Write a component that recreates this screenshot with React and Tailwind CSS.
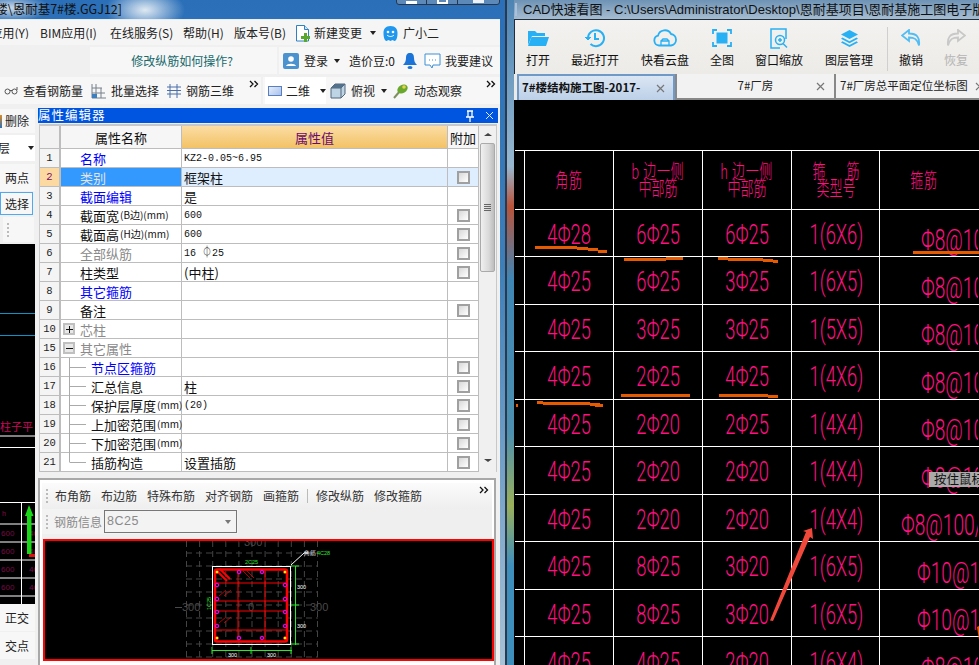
import React from "react";

const CJK = "[font-family:'Noto_Sans_CJK_SC','Liberation_Sans',sans-serif]";
const MONO = "[font-family:'Liberation_Mono','Noto_Sans_CJK_SC',monospace]";
const THIN = "[font-family:'Roboto','Noto_Sans_CJK_SC',sans-serif]";

function Chevrons({ className = "" }) {
  return (
    <svg width="10" height="8" viewBox="0 0 10 8" className={className}>
      <path d="M1 1l3 3-3 3M5.500 1l3 3-3 3" fill="none" stroke="#111" strokeWidth="1.300" />
    </svg>
  );
}
function Caret({ className = "" }) {
  return <span className={"inline-block w-0 h-0 border-x-[3px] border-x-transparent border-t-[4px] border-t-[#222] " + className} />;
}
function Grip() {
  return (
    <svg width="4" height="16" viewBox="0 0 4 16" className="shrink-0">
      {[1, 5, 9, 13].map((y) => <rect key={y} x="1" y={y} width="2" height="2" fill="#bbb" />)}
    </svg>
  );
}

/* ---------- left window ---------- */
function MenuBar() {
  return (
    <div className="h-[26px] mr-[5px] pt-[1px] bg-[#f5f5f5] border-t border-[#e8eef5] flex items-center text-[12px] text-[#222] leading-none whitespace-nowrap">
      <span className="w-[29px] overflow-hidden flex justify-end">应用(Y)</span>
      <span className="ml-[11px] w-[59px]">BIM应用(I)</span>
      <span className="ml-[11px] w-[62px]">在线服务(S)</span>
      <span className="ml-[11px] w-[40px]">帮助(H)</span>
      <span className="ml-[11px] w-[51px]">版本号(B)</span>
      <svg width="15" height="17" viewBox="0 0 15 17" className="ml-[10px]">
        <path d="M1.500.5h8l4 4v11.500h-12z" fill="#fff" stroke="#2f7fc4" />
        <path d="M9.500.5v4h4" fill="#cfe6f7" stroke="#2f7fc4" />
        <path d="M9 8h3v3h3v3h-3v3H9v-3H6v-3h3z" fill="#58a82d" />
      </svg>
      <span className="ml-[4px]">新建变更</span>
      <Caret className="ml-[8px]" />
      <svg width="17" height="17" viewBox="0 0 16 17" className="ml-[6px]">
        <path d="M8 1c5 0 7 3 7 7 0 4-1 8-3 8l-2-1-2 1-2-1-2 1C2 16 1 12 1 8c0-4 2-7 7-7z" fill="#1f97ee" />
        <circle cx="5.500" cy="7" r="1.300" fill="#fff" /><circle cx="10.500" cy="7" r="1.300" fill="#fff" />
        <path d="M4.500 10c2 2 5 2 7 0" fill="none" stroke="#fff" />
      </svg>
      <span className="ml-[4px]">广小二</span>
    </div>
  );
}

function HelpBar() {
  return (
    <div className="h-[32px] mr-[5px] bg-[#f0f0f0] pt-[2px] pb-[3px] flex text-[12px] leading-none whitespace-nowrap">
      <div className="ml-[90px] w-[187px] pt-[1px] pr-[3px] bg-[#f7f7f7] flex items-center justify-center text-[#17696c]">修改纵筋如何操作?</div>
      <div className="ml-[2px] w-[221px] pt-[1px] bg-[#f7f7f7] flex items-center text-[#222]">
        <svg width="16" height="16" viewBox="0 0 16 16" className="ml-[4px]">
          <rect width="16" height="16" rx="2" fill="#4a93cf" />
          <circle cx="8" cy="6" r="2.800" fill="#fff" />
          <path d="M3 13c1-3 9-3 10 0z" fill="#fff" />
        </svg>
        <span className="ml-[5px]">登录</span>
        <Caret className="ml-[6px]" />
        <span className="ml-[9px]">造价豆:0</span>
        <svg width="14" height="16" viewBox="0 0 14 16" className="ml-[8px]">
          <path d="M7 0c3 0 4 2 4 5 0 3 1 5 3 7H0c2-2 3-4 3-7 0-3 1-5 4-5z" fill="#1c74d8" />
          <ellipse cx="7" cy="14.500" rx="2.500" ry="1.500" fill="#1c74d8" />
        </svg>
        <svg width="17" height="17" viewBox="0 0 17 17" className="ml-[7px]">
          <path d="M1 1h15v11H9l-1 3-2-3H1z" fill="#fff" stroke="#3b8fd6" />
          <path d="M5 7h1M8 7h1M11 7h1" stroke="#3b8fd6" />
        </svg>
        <span className="ml-[4px]">我要建议</span>
      </div>
    </div>
  );
}

function ViewBar() {
  return (
    <div className="h-[31px] mr-[5px] bg-[#f0f0f0] flex text-[12px] leading-none whitespace-nowrap text-[#222] pb-[4px]">
      <div className="w-[261px] pt-[1px] bg-[#f7f7f7] relative flex items-center">
        <svg width="14" height="8" viewBox="0 0 14 8" className="ml-[4px]">
          <circle cx="3.500" cy="4.500" r="2.500" fill="none" stroke="#555" /><circle cx="10.500" cy="4.500" r="2.500" fill="none" stroke="#555" />
          <path d="M6 3.500h2M13 3V0" stroke="#555" />
        </svg>
        <span className="ml-[5px]">查看钢筋量</span>
        <svg width="16" height="16" viewBox="0 0 16 16" className="ml-[8px]">
          <path d="M1 1v14h14M1 5h10M1 10h13M5 1v14M10 5v10" fill="none" stroke="#76808c" />
          <rect x="1" y="11" width="5" height="4" fill="#3f7fc0" />
        </svg>
        <span className="ml-[4px]">批量选择</span>
        <svg width="16" height="16" viewBox="0 0 16 16" className="ml-[7px]">
          <path d="M1 4h14M1 11h14M4 1v14M11 1v14M1 7.500h14" fill="none" stroke="#4b6ea8" />
        </svg>
        <span className="ml-[4px]">钢筋三维</span>
        <Chevrons className="absolute right-[2px] top-[3px]" />
      </div>
      <div className="ml-[2px] flex-1 bg-[#f7f7f7] relative flex items-center">
        <div className="ml-[2px] w-[61px] h-full pt-[1px] bg-white flex items-center">
          <span className="ml-[3px] w-[14px] h-[10px] border border-[#5a7fc0] bg-[linear-gradient(135deg,#e4edfb,#a9c2ec)]" />
          <span className="ml-[4px]">二维</span>
          <Caret className="ml-[10px]" />
        </div>
        <svg width="16" height="16" viewBox="0 0 16 16" className="ml-[4px]">
          <path d="M1 5l4-4h10v10l-4 4H1z" fill="#bcd4e4" stroke="#53677a" />
          <path d="M1 5h10v10M11 5l4-4" fill="none" stroke="#53677a" />
          <path d="M1 5l4-4h10l-4 4z" fill="#54718c" />
        </svg>
        <span className="ml-[5px] pt-[1px]">俯视</span>
        <Caret className="ml-[6px]" />
        <svg width="16" height="16" viewBox="0 0 16 16" className="ml-[6px]">
          <path d="M1 15L7 8" stroke="#7f8f60" strokeWidth="2" />
          <ellipse cx="9.500" cy="6" rx="5.500" ry="4" fill="#6aa82d" transform="rotate(-30 9.500 6)" />
          <circle cx="11" cy="4" r="1.800" fill="#e5d34a" />
        </svg>
        <span className="ml-[5px] pt-[1px]">动态观察</span>
        <Chevrons className="absolute right-[4px] top-[3px]" />
      </div>
    </div>
  );
}

function Sidebar() {
  const tool = "flex items-center justify-center bg-[#f7f7f7] text-[12px] leading-none text-[#222]";
  return (
    <div className="w-[38px] h-full bg-[#f0f0f0] flex flex-col whitespace-nowrap">
      <div className={tool + " h-[24px] justify-start mt-[1px] mr-[3px]"}>
        <span className="w-[2px] h-[13px] bg-[linear-gradient(#e08a20,#2f6fb5)]" />
        <span className="ml-[3px]">删除</span>
      </div>
      <div className="h-[26px] mt-[2px] bg-white flex items-center mr-[3px] justify-between pr-[1px]">
        <span className="w-[10px] overflow-hidden text-[12px] leading-none text-[#222] flex justify-end">层</span>
        <Caret />
      </div>
      <div className={tool + " h-[27px] mt-[3px] mr-[3px] pl-[5px] justify-start"}>两点</div>
      <div className={tool + " h-[23px] mt-[1px] mr-[5px] border border-[#50a8f0] pl-[4px] justify-start"}>选择</div>
      <div className="h-[25px] mt-[2px] mr-[4px] ml-[3px] bg-[#f7f7f7] flex items-center pl-[3px]"><Grip /></div>
      <div className="h-[360px] mt-[2px] mr-[3px] bg-black overflow-hidden">
        <svg width="35" height="360" viewBox="0 243 35 360">
          <path d="M0 312.500h35M0 334.500h35" stroke="#0a94c8" />
          <path d="M0 435h35M0 446.500h35" stroke="#fff" />
          <text x="0" y="430" fontSize="11" fill="#c80a5a" fontFamily="'Noto Sans CJK SC', sans-serif">柱子平</text>
          <path d="M0 501.500h35M0 523h35M0 541h35M0 559h35M0 577h35M0 595h35M21.500 501v102" stroke="#fff" />
          <text x="2" y="515" fontSize="7" fill="#8a0a4a" fontFamily="'Liberation Sans', sans-serif">h</text>
          {[535, 553, 571, 589].map((y) => (
            <g key={y} fontSize="8" fontFamily="'Liberation Sans', sans-serif" fill="#7a0a46">
              <text x="1" y={y}>600</text>
              <text x="29" y={y}>40</text>
            </g>
          ))}
          <rect x="29" y="553" width="6" height="3" fill="#e01010" />
          <path d="M29 504l-4 11h2v38h4.500v-38h2z" fill="#18d818" />
        </svg>
      </div>
      <div className={tool + " h-[27px] mr-[3px] pl-[5px] justify-start bg-[#f5f5f5]"}>正交</div>
      <div className={tool + " h-[27px] mt-[1px] mr-[3px] pl-[5px] justify-start bg-[#eeeeee]"}>交点</div>
    </div>
  );
}

const PROPS = [
  ["1", "名称", "KZ2-0.05~6.95", "blue", false, 0],
  ["2", "类别", "框架柱", "sel", true, 0],
  ["3", "截面编辑", "是", "blue", false, 0],
  ["4", "截面宽(B边)(mm)", "600", "", true, 0],
  ["5", "截面高(H边)(mm)", "600", "", true, 0],
  ["6", "全部纵筋", "16 ⏀25", "gray", true, 0],
  ["7", "柱类型", "(中柱)", "", true, 0],
  ["8", "其它箍筋", "", "blue", false, 0],
  ["9", "备注", "", "", true, 0],
  ["10", "芯柱", "", "gray", false, 1],
  ["15", "其它属性", "", "gray", false, 2],
  ["16", "节点区箍筋", "", "blue", true, 3],
  ["17", "汇总信息", "柱", "", true, 3],
  ["18", "保护层厚度(mm)", "(20)", "", true, 3],
  ["19", "上加密范围(mm)", "", "", true, 3],
  ["20", "下加密范围(mm)", "", "", true, 3],
  ["21", "插筋构造", "设置插筋", "", true, 3],
];

function Check() {
  return <span className="block w-[13px] h-[13px] border-2 border-[#a0a0a0] bg-[linear-gradient(135deg,#d8d8d8,#fff)]" />;
}

function PropRow({ r }) {
  const [num, name, value, kind, check, tree] = r;
  const sel = kind === "sel";
  const color = kind === "blue" ? "text-[#0000ff]" : kind === "gray" ? "text-[#8a8a8a]" : sel ? "text-[#e4e4e4]" : "text-[#111]";
  const latin = /^[0-9KZ(]/.test(value) && !value.includes("中");
  const cut = name.indexOf("(");
  return (
    <div className={"flex h-[19px] border-b border-[#bdbdbd] leading-none " + (sel ? "bg-[#dfeeff]" : "bg-white")}>
      <div className={"w-[21px] border-r-2 border-[#bdbdbd] flex items-center justify-center text-[10.500px] [font-family:'Liberation_Mono',monospace] " + (sel ? "bg-[#fcd9a0] text-[#7a0a6a]" : "bg-[#f4f4f4] text-[#222]")}>{num}</div>
      <div className={"w-[121px] border-r border-[#bdbdbd] relative flex items-center text-[13px] whitespace-nowrap " + color + " " + (sel ? "bg-[#3399ff]" : "") + " " + (tree === 3 ? "pl-[30px]" : "pl-[19px]")}>
        {(tree === 1 || tree === 2) && (
          <span className="absolute left-[2px] top-[3px] w-[12px] h-[12px] border-2 border-[#c0c0c0] bg-[#e8e8e8] flex items-center justify-center">
            <span className="w-[7px] h-px bg-[#111]" />
            {tree === 1 && <span className="absolute w-px h-[7px] bg-[#111]" />}
          </span>
        )}
        {tree === 3 && (
          <svg width="20" height="19" viewBox="0 0 20 19" className="absolute left-[7px] top-0">
            <path d={num === "21" ? "M1.500 0v9.500M2 9.500h16" : "M1.500 0v19M2 9.500h16"} stroke="#aaa" fill="none" />
          </svg>
        )}
        {cut < 0 ? name : (
          <>
            {name.slice(0, cut)}
            <span className="text-[10px] ml-[1px]">{name.slice(cut)}</span>
          </>
        )}
      </div>
      <div className={"w-[266px] border-r border-[#bdbdbd] flex items-center pl-[2px] whitespace-nowrap text-[#111] " + (latin ? MONO : "text-[13px]") + (kind === "gray" ? " text-[#8a8a8a]" : "")}>
        {latin ? <span className="inline-block origin-left scale-x-[0.91] text-[11px]">{value}</span> : value}
      </div>
      <div className="w-[31px] border-r border-[#bdbdbd] flex items-center justify-center">{check && <Check />}</div>
    </div>
  );
}

function Scrollbar() {
  return (
    <div className="w-[17px] bg-[#f0f0f0] flex flex-col items-center">
      <span className="mt-[7px] w-0 h-0 border-x-[4px] border-x-transparent border-b-[3px] border-b-[#444]" />
      <div className="mt-[7px] w-[15px] h-[129px] rounded-[2px] border border-[#aaa] bg-[linear-gradient(90deg,#f0f0f0,#d9d9d9_60%,#bdbdbd)] flex flex-col items-center justify-center gap-[1px]">
        {[0, 1, 2, 3].map((i) => <span key={i} className="w-[7px] h-px bg-[#666]" />)}
      </div>
      <span className="mt-[187px] w-0 h-0 border-x-[4px] border-x-transparent border-t-[3px] border-t-[#444]" />
    </div>
  );
}

function RebarDiagram() {
  const xs = []; for (let x = 186.500; x <= 318; x += 13.100) xs.push(x);
  const ys = []; for (let y = 554; y <= 660; y += 13) ys.push(y);
  const pink = [[239, 573], [262, 573], [239, 639], [262, 639], [217, 586], [217, 600], [217, 613], [217, 627], [285, 586], [285, 600], [285, 613], [285, 627]];
  const yellow = [[217, 573], [285, 573], [217, 639], [285, 639]];
  const gtxt = { fontFamily: "'Liberation Sans', sans-serif" };
  return (
    <svg width="451" height="121" viewBox="43 540 451 121" className="block">
      <rect x="43" y="540" width="451" height="121" fill="#000" />
      <g stroke="#444" strokeDasharray="6 4">
        {xs.map((x) => <path key={x} d={`M${x} 542V659`} />)}
        {ys.map((y) => <path key={y} d={`M186 ${y}H318`} />)}
      </g>
      <g fill="#4a4a4a" fontSize="11" style={gtxt}>
        <text x="182" y="612">300</text>
        <text x="310" y="612">300</text>
        <text x="244" y="547">300</text>
        <text x="248" y="612">0</text>
      </g>
      <path d="M175 608.500h7" stroke="#4a4a4a" />
      <rect x="212.500" y="567.500" width="78" height="78" fill="none" stroke="#fff" />
      <rect x="215" y="570.500" width="72" height="72" rx="2" fill="none" stroke="#f00" strokeWidth="2.500" />
      <path d="M238 571V642M265 571V642M215 584H287M215 602H287M215 612H287M215 631H287" stroke="#f00" fill="none" />
      <path d="M217 572l10 10M220 570l10 10" stroke="#f00" strokeWidth="2" />
      <path d="M219 597l7-6M224 597l7-6M219 624l7-6M224 624l7-6M243 572l7 7M247 572l7 7" stroke="#f00" strokeWidth="0.700" />
      {pink.map(([x, y]) => <circle key={`${x}-${y}`} cx={x} cy={y} r="1.800" fill="#300030" stroke="#f0f" />)}
      {yellow.map(([x, y]) => <circle key={`${x}-${y}`} cx={x} cy={y} r="1.600" fill="#ff0" stroke="#f00" strokeWidth="0.500" />)}
      <path d="M212 651.500H292M295.500 567V646" stroke="#2be82b" fill="none" />
      <path d="M212 648v7M251 648v7M291 648v7M291 567h8M291 606h8M291 645h8" stroke="#2be82b" fill="none" />
      <path d="M291 566l13-12h4" stroke="#fff" fill="none" />
      <g fontSize="5.500" style={gtxt}>
        <text x="304" y="556" fill="#fff">角筋</text>
        <text x="317" y="556" fill="#2be82b">4C28</text>
        <text x="245" y="565" fill="#2be82b">2C25</text>
        <text x="297" y="590" fill="#fff">300</text>
        <text x="297" y="629" fill="#fff">300</text>
        <text x="228" y="658" fill="#fff">300</text>
        <text x="267" y="658" fill="#fff">300</text>
        <text x="0" y="0" fill="#2be82b" transform="translate(211 611) rotate(-90)">1C25</text>
      </g>
    </svg>
  );
}

function BottomPanel() {
  const t = "text-[#333]";
  return (
    <div className="mt-[6px] h-[187px] w-[458px] border-2 border-[#a8a8a8] border-b-0 bg-white pt-[3px] flex flex-col">
      <div className="mx-[2px] h-[26px] bg-[linear-gradient(#fbfbfb,#eeeeee)] flex items-center text-[12px] leading-none whitespace-nowrap relative">
        <span className="ml-[3px]"><Grip /></span>
        <span className={"ml-[6px] " + t}>布角筋</span>
        <span className={"ml-[10px] " + t}>布边筋</span>
        <span className={"ml-[10px] " + t}>特殊布筋</span>
        <span className={"ml-[10px] " + t}>对齐钢筋</span>
        <span className={"ml-[10px] " + t}>画箍筋</span>
        <span className="ml-[8px] w-px h-[14px] bg-[#bbb]" />
        <span className={"ml-[8px] " + t}>修改纵筋</span>
        <span className={"ml-[10px] " + t}>修改箍筋</span>
        <Chevrons className="absolute right-[3px] top-[3px]" />
      </div>
      <div className="mx-[2px] h-[31px] bg-[#efefef] flex items-start whitespace-nowrap leading-none">
        <div className="w-[196px] h-[25px] bg-[#f3f3f3] flex items-center">
          <span className="ml-[3px]"><Grip /></span>
          <span className="ml-[5px] text-[12px] text-[#8a8a8a]">钢筋信息</span>
          <div className="ml-[2px] w-[133px] h-[23px] border border-[#777] flex items-center justify-between px-[2px] shrink-0">
            <span className="text-[12.500px] text-[#8a8a8a] [font-family:'Liberation_Sans',sans-serif] tracking-[0.500px]">8C25</span>
            <Caret className="mr-[3px] border-t-[#777]" />
          </div>
        </div>
      </div>
      <div className="ml-[3px] w-[451px] border-2 border-[#ff0000] h-[122px] overflow-hidden bg-black -mt-[1px]">
        <div className="-m-[2px]"><RebarDiagram /></div>
      </div>
    </div>
  );
}

function PropertyEditor() {
  return (
    <div className="w-[462px] flex flex-col bg-[#f0f0f0] h-full">
      <div className="h-[15px] w-[460px] bg-[#0055e0] flex items-center text-white text-[12.500px] leading-none tracking-[1px] shrink-0 whitespace-nowrap">
        <span>属性编辑器</span>
        <svg width="10" height="12" viewBox="0 0 10 12" className="ml-auto">
          <path d="M2 1h6M3 1v6M7 1v6M1 7h8M5 7v5" stroke="#fff" strokeWidth="1.300" />
        </svg>
        <svg width="9" height="9" viewBox="0 0 9 9" className="ml-[10px] mr-[4px]">
          <path d="M1 1l7 7M8 1L1 8" stroke="#dfe9ff" />
        </svg>
      </div>
      <div className="ml-[1px] w-[458px] border-x border-t-2 border-[#c8c8c8] bg-white h-[348px] flex mt-[1px] shrink-0">
        <div className="w-[440px]">
          <div className="flex h-[23px] border-b border-[#bdbdbd] text-[13px] leading-none">
            <div className="w-[21px] border-r-2 border-[#bdbdbd] bg-[#f2f2f2]" />
            <div className="w-[121px] border-r border-[#bdbdbd] bg-[#f6f6f6] flex items-center justify-center text-[#111]">属性名称</div>
            <div className="w-[266px] border-r border-[#bdbdbd] bg-[linear-gradient(#fbdda4,#f3c265)] flex items-center justify-center text-[#6a0a70]">属性值</div>
            <div className="w-[31px] border-r border-[#bdbdbd] bg-[#f6f6f6] flex items-center justify-center text-[#111]">附加</div>
          </div>
          {PROPS.map((r) => <PropRow key={r[0]} r={r} />)}
        </div>
        <Scrollbar />
      </div>
      <BottomPanel />
    </div>
  );
}

function LeftWindow() {
  return (
    <div className={"w-[505px] h-full flex flex-col shrink-0 " + CJK}>
      <div className="h-[19px] flex items-center relative shrink-0 text-[12.500px] leading-none text-[#111] whitespace-nowrap bg-[radial-gradient(ellipse_40px_22px_at_145px_10px,#dfe9f2,transparent),radial-gradient(ellipse_40px_14px_at_10px_8px,#cfdbe8,transparent)]">
        <span className="w-[122px] overflow-hidden flex justify-end">楼\恩耐基7#楼.GGJ12]</span>
        <div className="absolute right-[5px] -top-[4px] w-[104px] h-[9px] rounded-b-[3px] border border-[#27364a] flex bg-[#5c89b8]">
          <span className="flex-1 border-r border-[#27364a] flex justify-center pt-[4px]"><span className="w-[11px] h-[3px] bg-white" /></span>
          <span className="flex-1 border-r border-[#27364a] flex justify-center"><span className="w-[11px] h-[7px] border-2 border-white" /></span>
          <span className="flex-[1.400] flex justify-center"><span className="w-[11px] h-[6px] bg-white/90" /></span>
        </div>
      </div>
      <MenuBar />
      <HelpBar />
      <ViewBar />
      <div className="flex flex-1 min-h-0 mr-[5px] bg-[#f0f0f0]">
        <Sidebar />
        <PropertyEditor />
      </div>
    </div>
  );
}

/* ---------- right window ---------- */
const C = "#28b0f4";
const ICONS = {
  open: (
    <svg width="22" height="17" viewBox="0 0 22 17"><path d="M1 15V1h7l2 2h8v3H5z" fill={C} /><path d="M4.500 7H22l-3 9H1z" fill={C} /></svg>
  ),
  recent: (
    <svg width="20" height="20" viewBox="0 0 20 20" fill="none" stroke={C} strokeWidth="2">
      <path d="M3 10a8 8 0 1 1 2.500 6" /><path d="M10 5v6h4" /><path d="M0 9l3 3 3-3" fill={C} strokeWidth="1" />
    </svg>
  ),
  cloud: (
    <svg width="24" height="18" viewBox="0 0 24 18" fill="none" stroke={C} strokeWidth="1.800">
      <path d="M6 16.500a5 5 0 0 1-1-9.800A7 7 0 0 1 18 5a5.800 5.800 0 0 1 0 11.500z" />
      <path d="M8 16v-4h8v4M8 12l2-2h4l2 2" strokeWidth="1.300" />
    </svg>
  ),
  full: (
    <svg width="20" height="18" viewBox="0 0 20 18" fill="none" stroke={C} strokeWidth="1.800">
      <path d="M1 5V1h4M15 1h4v4M19 13v4h-4M5 17H1v-4" /><rect x="4.500" y="3.500" width="11" height="11" fill={C} stroke="none" />
    </svg>
  ),
  zoom: (
    <svg width="18" height="21" viewBox="0 0 18 21" fill="none" stroke={C} strokeWidth="1.500">
      <path d="M10 20H1V1h15v10" /><circle cx="10" cy="12" r="4.500" /><path d="M13 15.500l4 4M8 12h4M10 10v4" />
    </svg>
  ),
  layers: (
    <svg width="17" height="17" viewBox="0 0 17 17" fill={C}>
      <path d="M8.500 0L17 4.500 8.500 9 0 4.500z" /><path d="M1.500 7.500l7 3.700 7-3.700L17 8.700l-8.500 4.500L0 8.700z" /><path d="M1.500 11.300l7 3.700 7-3.700L17 12.500 8.500 17 0 12.500z" />
    </svg>
  ),
  undo: (
    <svg width="20" height="18" viewBox="0 0 20 18" fill="none" stroke="#52bdf3" strokeWidth="1.800">
      <path d="M8 1L1 6.500 8 12V8.500c5 0 8 1 10 8 1-8-2-12-10-12z" />
    </svg>
  ),
  redo: (
    <svg width="20" height="18" viewBox="0 0 20 18" fill="none" stroke="#c8c8c8" strokeWidth="1.800">
      <path d="M12 1l7 5.500L12 12V8.500c-5 0-8 1-10 8-1-8 2-12 10-12z" />
    </svg>
  ),
};

function Tool({ icon, label, w, gray }) {
  return (
    <div className="flex flex-col items-center shrink-0" style={{ width: w }}>
      <div className="h-[22px] flex items-center justify-center">{ICONS[icon]}</div>
      <span className={"mt-[5px] text-[12px] leading-none whitespace-nowrap " + (gray ? "text-[#b5b5b5]" : "text-[#111]")}>{label}</span>
    </div>
  );
}

function Tab({ w, active, label, closeClass = "" }) {
  return (
    <div className={"h-[26px] flex items-center shrink-0 relative text-[11.500px] leading-none whitespace-nowrap " + (active ? "bg-[linear-gradient(#dbe6f3,#bcd0e8)] border-2 border-[#6f9ac8] border-b-0 font-bold text-[#111]" : "bg-[#f2f2f2] border-l-2 border-[#888] border-b-2 text-[#222]")} style={{ width: w }}>
      {label}
      <svg width="9" height="9" viewBox="0 0 9 9" className={"absolute top-[8px] " + closeClass}>
        <path d="M1 1l7 7M8 1L1 8" stroke="#777" strokeWidth="1.200" />
      </svg>
    </div>
  );
}

function Cad({ children, className = "" }) {
  return (
    <span className={"inline-block mt-[5px] whitespace-nowrap scale-x-[0.68] text-[27px] leading-none text-[#ff0f80] font-light " + THIN + " " + className}>{children}</span>
  );
}
function CadHead({ a, b, spaced }) {
  return (
    <div className="flex flex-col items-center leading-none text-[#ff0f80] text-[20px] font-light whitespace-nowrap">
      <span className={"inline-block scale-x-[0.65] " + (spaced ? "tracking-[32px] pl-[32px]" : "tracking-[1px]")}>{a}</span>
      {b && <span className="inline-block scale-x-[0.65] -mt-[3px]">{b}</span>}
    </div>
  );
}

const ROWS = [
  ["4Φ28", "6Φ25", "6Φ25", "1(6X6)", "Φ8@100", 41],
  ["4Φ25", "6Φ25", "3Φ25", "1(6X5)", "Φ8@100", 41],
  ["4Φ25", "3Φ25", "3Φ25", "1(5X5)", "Φ8@100", 41],
  ["4Φ25", "2Φ25", "4Φ25", "1(4X6)", "Φ8@100", 41],
  ["4Φ25", "2Φ20", "2Φ25", "1(4X4)", "Φ8@100", 41],
  ["4Φ25", "2Φ20", "2Φ20", "1(4X4)", "Φ8@100", 41],
  ["4Φ25", "2Φ20", "2Φ20", "1(4X4)", "Φ8@100/", 21],
  ["4Φ25", "8Φ25", "3Φ20", "1(6X5)", "Φ10@100", 37],
  ["4Φ25", "8Φ25", "3Φ20", "1(6X5)", "Φ10@100", 37],
  ["4Φ25", "4Φ25", "2Φ20", "1(6X4)", "Φ8@100", 41],
];

function CadRow({ cells, h, last }) {
  const cell = "w-[89px] shrink-0 border-l border-white flex items-center justify-center overflow-visible";
  return (
    <div className={"flex border-b border-white " + (last ? "border-b-0" : "")} style={{ height: h }}>
      <div className="w-[9px] shrink-0" />
      {cells.map((c, i) => <div key={i} className={cell}>{c}</div>)}
    </div>
  );
}

function CadSheet() {
  return (
    <div className={"relative flex-1 min-h-0 bg-black overflow-hidden pt-[50px] pl-[1px] " + CJK}>
      <div className="w-[470px]">
        <div className="border-t border-white" />
        <CadRow h={58.500} cells={[<CadHead a="角筋" />, <CadHead a="b 边一侧" b="中部筋" />, <CadHead a="h 边一侧" b="中部筋" />, <CadHead a="箍筋" b="类型号" spaced />]} />
        {ROWS.map((r, i) => (
          <CadRow key={i} h={47.500} last={i === ROWS.length - 1} cells={r.slice(0, 4).map((t) => <Cad>{t}</Cad>)} />
        ))}
      </div>
      {/* stirrup column runs off the window's right edge */}
      <div className="absolute left-[365px] top-[50px] w-[99px] h-[515px] flex flex-col border-l border-white overflow-hidden">
        <div className="h-[59px] flex items-center justify-center -ml-[11px] shrink-0"><CadHead a="箍筋" /></div>
        {ROWS.map((r, i) => (
          <div key={i} className="h-[47.500px] shrink-0 flex items-center relative">
            <span className={"absolute top-[17px] origin-left scale-x-[0.66] text-[29px] font-light leading-none text-[#ff0f80] whitespace-nowrap " + THIN} style={{ left: r[5] }}>{r[4]}</span>
          </div>
        ))}
      </div>
      {/* hand annotations laid over the drawing */}
      <svg width="465" height="565" viewBox="514 100 465 565" className="absolute left-0 top-0 pointer-events-none">
        <g fill="#e85a00">
          <path d="M535 246h42v3h-42zM577 247h11v3h-11zM588 248h10v3h-10zM598 250h9v3h-9z" />
          <path d="M624 258h42v3h-42zM666 257h17v3h-17z" />
          <path d="M718 257h10v3h-10zM728 258h35v3h-35zM763 259h10v3h-10zM773 260h5v3h-5z" />
          <path d="M913 251h66v3h-66z" />
          <path d="M621 394h69v3h-69z" />
          <path d="M719 394h49v3h-49zM768 395h10v3h-10z" />
          <path d="M537 401h6v3h-6zM543 402h47v3h-47zM590 403h10v3h-10zM595 404h8v3h-8z" />
          <path d="M516 404h2v3h-2z" />
          <path d="M977 627l2-1v14z" />
        </g>
        <path d="M770 620.500l36-88.500-3-1 9-3 1 11-3-2-37 84z" fill="#f0493c" />
      </svg>
      <div className="absolute left-[415px] top-[372px] h-[15px] w-[50px] bg-[#aaaaaa] text-[#111] text-[12.500px] leading-none flex items-center pl-[5px] whitespace-nowrap overflow-hidden">按住鼠标</div>
    </div>
  );
}

function RightWindow() {
  return (
    <div className={"flex-1 h-full flex flex-col min-w-0 " + CJK}>
      <div className="h-[19px] flex items-center shrink-0 text-[13px] leading-none text-[#111] whitespace-nowrap overflow-hidden bg-[linear-gradient(#6e93b5,#a6bdd1)]">
        <span className="ml-[1px] w-[15px] h-[13px] bg-[#2f5f9e] border border-[#a9c1dd] text-white text-[8px] leading-none font-bold flex items-center justify-center overflow-hidden">CAD</span>
        <span className="ml-[6px] [font-family:'Liberation_Sans','Noto_Sans_CJK_SC',sans-serif]">CAD快速看图 - C:\Users\Administrator\Desktop\恩耐基项目\恩耐基施工图电子版</span>
      </div>
      <div className="h-[55px] bg-[linear-gradient(#f3f2f0,#ecebe7)] border-t border-[#1f2d3d] border-l flex items-start pt-[7px] shrink-0 relative">
        <Tool icon="open" label="打开" w="46px" />
        <Tool icon="recent" label="最近打开" w="68px" />
        <Tool icon="cloud" label="快看云盘" w="72px" />
        <Tool icon="full" label="全图" w="42px" />
        <Tool icon="zoom" label="窗口缩放" w="72px" />
        <Tool icon="layers" label="图层管理" w="68px" />
        <span className="ml-[4px] w-px h-[44px] bg-[#cfcfcf] shrink-0" />
        <Tool icon="undo" label="撤销" w="46px" />
        <Tool icon="redo" label="恢复" w="44px" gray />
      </div>
      <div className="flex bg-[#ecebe7] pl-[3px] shrink-0 overflow-hidden">
        <Tab w="158px" active closeClass="right-[8px]" label={<span className="pl-[3px] w-[135px] overflow-hidden">7#楼结构施工图-2017-</span>} />
        <Tab w="159px" closeClass="right-[9px]" label={<span className="w-full text-center">7#厂房</span>} />
        <Tab w="150px" closeClass="right-[0px]" label={<span className="pl-[4px]">7#厂房总平面定位坐标图</span>} />
      </div>
      <CadSheet />
    </div>
  );
}

export default function App() {
  return (
    <div className="w-[979px] h-[665px] overflow-hidden flex bg-[linear-gradient(180deg,#2a6fb8_0%,#3f7fb8_40%,#a8c2d6_100%)]">
      <LeftWindow />
      <div className="w-[2px] h-full bg-[#2a3a4c] shrink-0" />
      <div className="w-[7px] h-full shrink-0 bg-[linear-gradient(180deg,#4c84b4_0%,#98b8d0_25%,#b9543a_31%,#3f86b5_42%,#4d90b0_65%,#9ab05a_76%,#3f8fbd_85%,#3f8fbd_100%)]" />
      <RightWindow />
    </div>
  );
}
